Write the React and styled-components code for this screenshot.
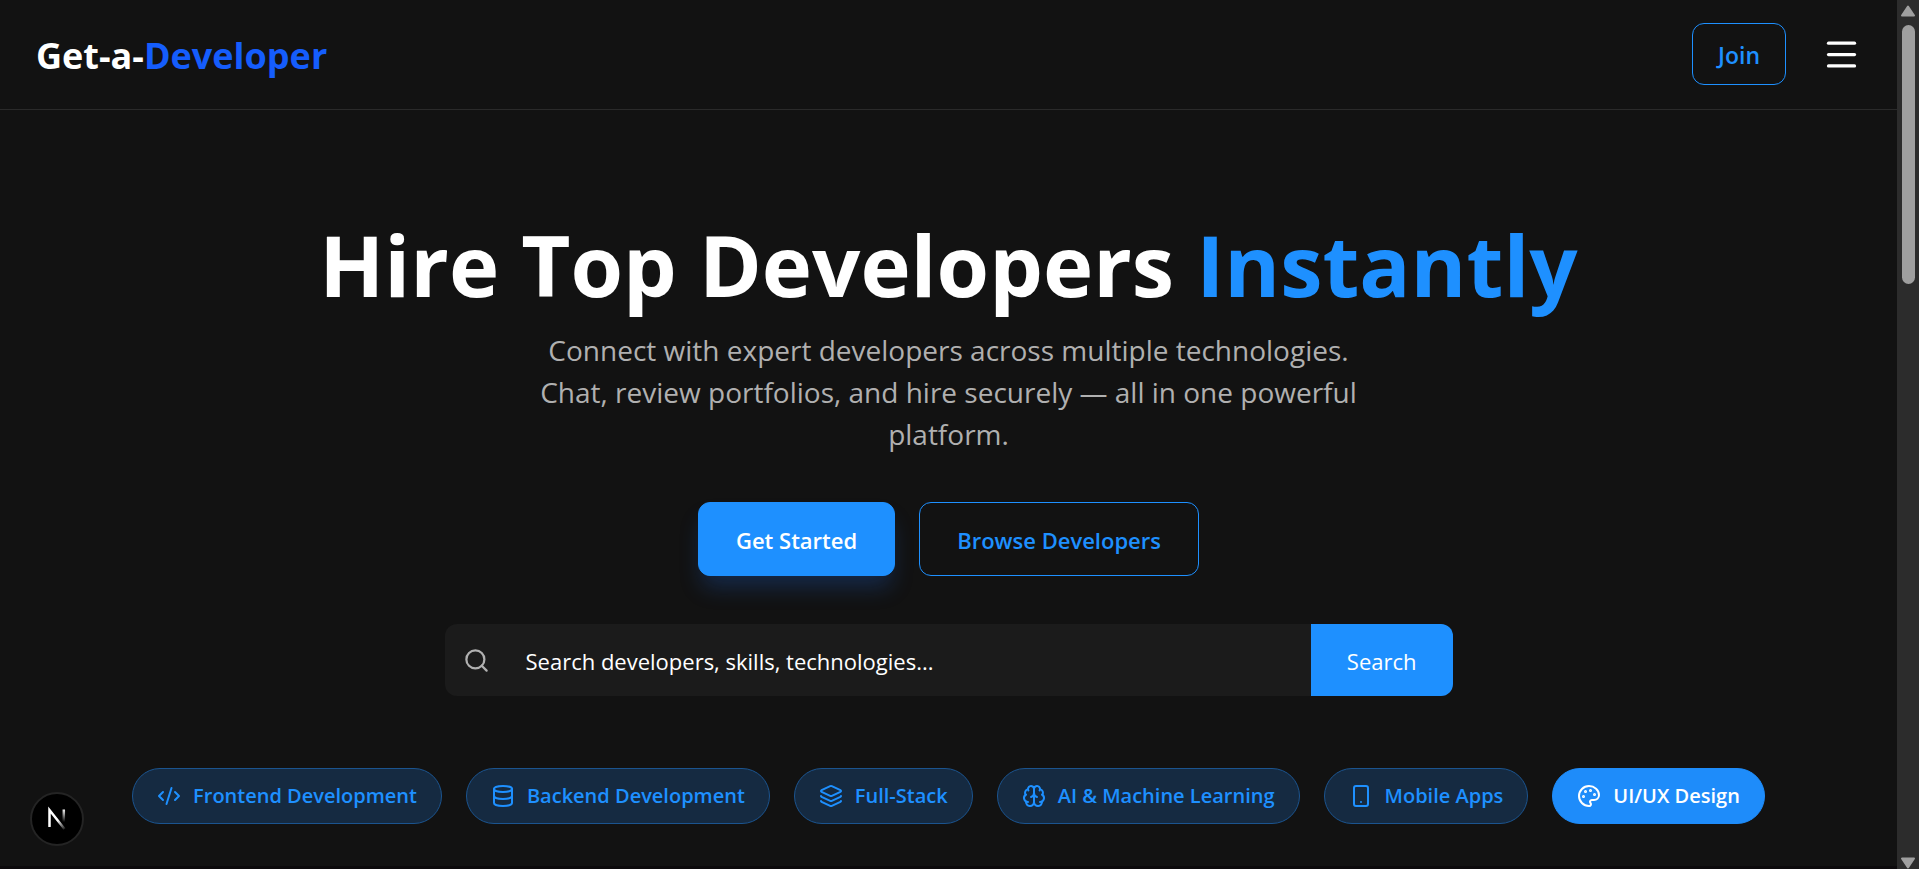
import React, { useState } from 'react';
import styled, { createGlobalStyle } from 'styled-components';
import { Brain, CodeXml, Database, Layers, Menu, Palette, Search, Smartphone } from 'lucide-react';

const categories = [
  { id: 'frontend', label: 'Frontend Development', icon: CodeXml },
  { id: 'backend', label: 'Backend Development', icon: Database },
  { id: 'fullstack', label: 'Full-Stack', icon: Layers },
  { id: 'ai', label: 'AI & Machine Learning', icon: Brain },
  { id: 'mobile', label: 'Mobile Apps', icon: Smartphone },
  { id: 'design', label: 'UI/UX Design', icon: Palette },
];

const App = () => {
  const [query, setQuery] = useState('');
  const [active, setActive] = useState('design');

  const handleSubmit = (e) => {
    e.preventDefault();
  }

  return (
    <>
      <GlobalStyle />
      <Shell>
        <Page>
          <Header>
            <Logo href="#">Get-a-<span>Developer</span></Logo>
            <HeaderActions>
              <JoinButton type="button">Join</JoinButton>
              <MenuButton type="button" aria-label="Open menu">
                <Menu size={39} />
              </MenuButton>
            </HeaderActions>
          </Header>
          <Hero>
            <Title>Hire Top Developers <span>Instantly</span></Title>
            <Subtitle>
              Connect with expert developers across multiple technologies.
              Chat, review portfolios, and hire securely — all in one powerful
              platform.
            </Subtitle>
            <HeroActions>
              <HeroButton type="button" $primary>Get Started</HeroButton>
              <HeroButton type="button">Browse Developers</HeroButton>
            </HeroActions>
            <SearchForm onSubmit={handleSubmit}>
              <SearchLabel htmlFor="search" aria-label="Search">
                <Search size={27} />
              </SearchLabel>
              <SearchInput
                id="search"
                type="text"
                placeholder="Search developers, skills, technologies..."
                value={query}
                onChange={(e) => setQuery(e.target.value)}
              />
              <SearchButton type="submit">Search</SearchButton>
            </SearchForm>
            <Categories>
              {categories.map(({ id, label, icon: Icon }) => (
                <Category
                  key={id}
                  type="button"
                  $active={id === active}
                  onClick={() => setActive(id)}
                >
                  <Icon size={24} />
                  {label}
                </Category>
              ))}
            </Categories>
          </Hero>
        </Page>
        <ScrollTrack aria-hidden="true">
          <ScrollArrow viewBox="0 0 16 12">
            <path d="M8 1.5 14 10.5H2Z" />
          </ScrollArrow>
          <ScrollThumb />
          <ScrollArrow viewBox="0 0 16 12">
            <path d="M8 10.5 2 1.5H14Z" />
          </ScrollArrow>
        </ScrollTrack>
      </Shell>
      <DevBadge type="button" aria-label="Open dev tools">
        <svg width="22" height="26" viewBox="0 0 22 26" fill="none">
          <defs>
            <linearGradient id="stem" x1="0" y1="3" x2="0" y2="16" gradientUnits="userSpaceOnUse">
              <stop stopColor="#fff" />
              <stop offset="1" stopColor="#fff" stopOpacity="0" />
            </linearGradient>
            <linearGradient id="diagonal" x1="12" y1="14" x2="19" y2="23" gradientUnits="userSpaceOnUse">
              <stop stopColor="#fff" />
              <stop offset="1" stopColor="#fff" stopOpacity="0.1" />
            </linearGradient>
          </defs>
          <path d="M3.5 21V4L18.5 23" stroke="url(#diagonal)" strokeWidth="2.5" />
          <path d="M17.8 3.5V16" stroke="url(#stem)" strokeWidth="2.5" />
        </svg>
      </DevBadge>
    </>
  );
};

const GlobalStyle = createGlobalStyle`
  * {
    box-sizing: border-box;
  }
  body {
    margin: 0;
    background-color: #0c0a0c;
    color: #ffffff;
    font-family: "Segoe UI", "Open Sans", "Noto Sans", sans-serif;
  }
  button, input {
    font-family: inherit;
  }
  button {
    cursor: pointer;
  }
`;

const Shell = styled.div`
  display: flex;
  align-items: flex-start;
  min-height: 100vh;
`

const Page = styled.div`
  flex: 1;
  min-width: 0;
  background-color: #121212;
`

const Header = styled.header`
  display: flex;
  align-items: center;
  justify-content: space-between;
  padding: 23px 36px 24px;
  border-bottom: 1px solid #2a2a2a;
`

const Logo = styled.a`
  padding-top: 4px;
  color: #ffffff;
  font-size: 36px;
  font-weight: 700;
  line-height: 48px;
  text-decoration: none;
  span {
    color: #155dfc;
  }
`

const HeaderActions = styled.div`
  display: flex;
  align-items: center;
  gap: 36px;
`

const JoinButton = styled.button`
  padding: 13px 25px 11px;
  border: 1px solid #1e90ff;
  border-radius: 12px;
  background-color: transparent;
  color: #1e90ff;
  font-size: 23px;
  font-weight: 600;
  line-height: 36px;
`

const MenuButton = styled.button`
  display: flex;
  padding: 0;
  border: none;
  background-color: transparent;
  color: #ffffff;
`

const Hero = styled.main`
  display: flex;
  flex-direction: column;
  align-items: center;
  padding: 106px 36px 42px;
  text-align: center;
`

const Title = styled.h1`
  margin: 0;
  font-size: 85px;
  font-weight: 700;
  line-height: 96px;
  span {
    color: #1e90ff;
  }
`

const Subtitle = styled.p`
  max-width: 864px;
  margin: 17px 0 0;
  color: #b0b0b0;
  font-size: 28px;
  line-height: 42px;
`

const HeroActions = styled.div`
  display: flex;
  gap: 24px;
  margin-top: 47px;
`

const HeroButton = styled.button`
  padding: 19px 37px 17px;
  border: 1px solid #1e90ff;
  border-radius: 12px;
  background-color: transparent;
  color: #1e90ff;
  font-size: 22px;
  font-weight: 600;
  line-height: 36px;
  ${({ $primary }) => $primary ? `
    background-color: #1e90ff;
    color: #ffffff;
    box-shadow: 0 15px 22px -4px rgba(30, 110, 240, 0.25);
  ` : ``}
`

const SearchForm = styled.form`
  display: flex;
  width: 100%;
  max-width: 1008px;
  margin-top: 48px;
  border-radius: 12px;
  background-color: #1b1b1b;
  overflow: hidden;
`

const SearchLabel = styled.label`
  display: flex;
  align-items: center;
  padding: 0 18px;
  color: #b0b0b0;
`

const SearchInput = styled.input`
  flex: 1;
  min-width: 0;
  padding: 19px 18px 17px;
  border: none;
  outline: none;
  background-color: transparent;
  color: #ffffff;
  font-size: 22px;
  line-height: 36px;
  &::placeholder {
    color: #ffffff;
    opacity: 1;
  }
`

const SearchButton = styled.button`
  padding: 19px 36px 17px;
  border: none;
  background-color: #1e90ff;
  color: #ffffff;
  font-size: 22px;
  line-height: 36px;
`

const Categories = styled.div`
  display: flex;
  flex-wrap: wrap;
  justify-content: center;
  gap: 24px;
  margin-top: 72px;
`

const Category = styled.button`
  display: flex;
  align-items: center;
  gap: 12px;
  padding: 12px 24px;
  border: 1px solid #1b548f;
  border-radius: 28px;
  background-color: #152a41;
  color: #1e90ff;
  font-size: 20px;
  font-weight: 600;
  line-height: 30px;
  ${({ $active }) => $active ? `
    border-color: #1e8cfa;
    background-color: #1e8cfa;
    color: #ffffff;
  ` : ``}
`

const ScrollTrack = styled.div`
  position: sticky;
  top: 0;
  display: flex;
  flex-direction: column;
  align-items: center;
  gap: 8px;
  width: 22px;
  height: 100vh;
  padding-top: 5px;
  background-color: #2c2c2c;
`

const ScrollArrow = styled.svg`
  width: 16px;
  height: 12px;
  fill: #9f9f9f;
  stroke: #9f9f9f;
  stroke-width: 2;
  stroke-linejoin: round;
`

const ScrollThumb = styled.div`
  width: 13px;
  height: 30%;
  margin-bottom: auto;
  border-radius: 7px;
  background-color: #9f9f9f;
`

const DevBadge = styled.button`
  position: fixed;
  left: 30px;
  bottom: 23px;
  display: flex;
  align-items: center;
  justify-content: center;
  width: 54px;
  height: 54px;
  padding: 0;
  border: 2px solid #242424;
  border-radius: 50%;
  background-color: #000000;
`

export default App;
